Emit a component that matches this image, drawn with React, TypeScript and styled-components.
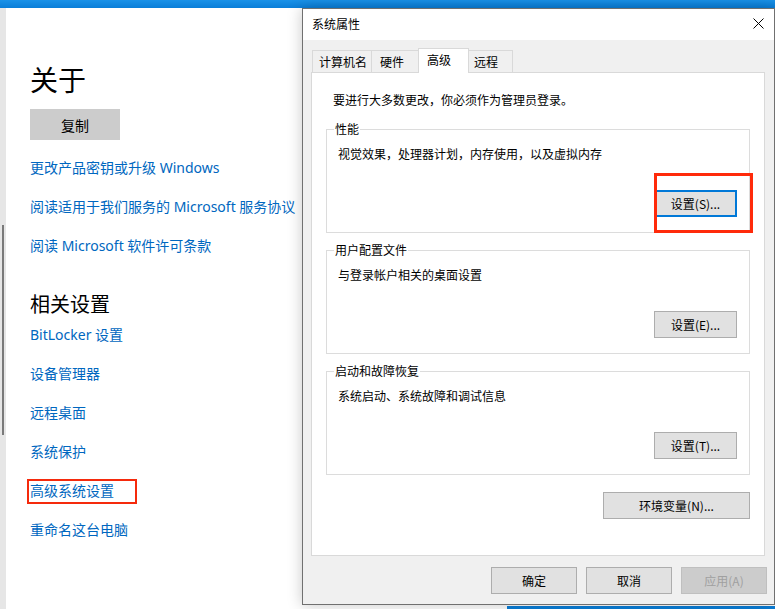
import React from "react";
import styled, { createGlobalStyle, css } from "styled-components";

const Global = createGlobalStyle`
  html, body { margin: 0; padding: 0; }
  body {
    width: 775px;
    height: 609px;
    overflow: hidden;
    background: #ffffff;
    font-family: "Noto Sans", "Noto Sans CJK SC", sans-serif;
  }
  * { box-sizing: border-box; }
`;

const Screen = styled.div`
  position: relative;
  width: 775px;
  height: 609px;
  display: flex;
  flex-direction: column;
  background: #ffffff;
  overflow: hidden;
`;

const TopBar = styled.div`
  flex: none;
  height: 8px;
  background: linear-gradient(#1a92e8, #0a7ed8);
`;

const BottomStrip = styled.div`
  position: absolute;
  left: 507px;
  top: 606px;
  width: 268px;
  height: 3px;
  background: #0a7ed8;
`;

const SettingsWindow = styled.div`
  flex: 1;
  display: flex;
`;

const ScrollTrack = styled.div`
  flex: none;
  width: 6px;
  background: #e6e6e6;
  padding-top: 217px;
  display: flex;
  justify-content: center;
  align-items: flex-start;
`;

const ScrollThumb = styled.div`
  width: 2px;
  height: 210px;
  background: #7a7a7a;
`;

const SettingsContent = styled.div`
  flex: 1;
  display: flex;
  flex-direction: column;
  align-items: flex-start;
  padding-left: 24px;
  color: #000;
`;

const PageTitle = styled.h1`
  margin: 52px 0 0;
  font-size: 28px;
  line-height: 40px;
  font-weight: 400;
  font-family: "Noto Sans", "Noto Sans CJK SC", sans-serif;
`;

const SectionTitle = styled.h2`
  margin: 35px 0 0;
  font-size: 20px;
  line-height: 28px;
  font-weight: 400;
  font-family: "Noto Sans", "Noto Sans CJK SC", sans-serif;
`;

const CopyButton = styled.button`
  margin-top: 9px;
  width: 90px;
  height: 31px;
  border: none;
  background: #cccccc;
  color: #000;
  font-size: 14px;
  font-family: "Noto Sans", "Noto Sans CJK SC", sans-serif;
  padding: 0;
`;

const LinkList = styled.div<{ $top: number }>`
  margin-top: ${(p) => p.$top}px;
  display: flex;
  flex-direction: column;
  align-items: flex-start;
  gap: 19px;
`;

const SettingLink = styled.a<{ $marked?: boolean }>`
  position: relative;
  display: block;
  font-size: 14px;
  line-height: 20px;
  color: #0067c0;
  text-decoration: none;
  white-space: nowrap;
  ${(p) =>
    p.$marked &&
    css`
      &::after {
        content: "";
        position: absolute;
        left: -3px;
        top: -2px;
        width: 106px;
        height: 21px;
        border: 2px solid #f52a0c;
      }
    `}
`;

/* ---------- dialog ---------- */

const Dialog = styled.div`
  position: absolute;
  left: 302px;
  top: 8px;
  width: 473px;
  height: 597px;
  border: 1px solid #707070;
  background: #f0f0f0;
  box-shadow: 0 0 14px rgba(0, 0, 0, 0.22);
  display: flex;
  flex-direction: column;
  font-family: "Noto Sans CJK SC", "Noto Sans", sans-serif;
  font-size: 12px;
  color: #000;
`;

const TitleBar = styled.div`
  flex: none;
  height: 31px;
  background: #ffffff;
  display: flex;
  align-items: center;
  justify-content: space-between;
  padding: 0 10px 0 9px;
`;

const TitleText = styled.span`
  font-size: 12px;
  line-height: 16px;
  margin-top: -2px;
`;

const CloseIcon = styled.svg`
  width: 11px;
  height: 11px;
  margin-top: -2px;
`;

const Client = styled.div`
  flex: 1;
  display: flex;
  flex-direction: column;
  padding: 8px 7px 10px 8px;
`;

const TabRow = styled.div`
  flex: none;
  height: 25px;
  display: flex;
  align-items: flex-start;
  padding-left: 1px;
  margin-right: 2px;
`;

const Tab = styled.div<{ $w: number; $pad: number; $active?: boolean }>`
  width: ${(p) => p.$w}px;
  padding-left: ${(p) => p.$pad}px;
  border: 1px solid #d9d9d9;
  border-bottom: none;
  margin-left: -1px;
  white-space: nowrap;
  ${(p) =>
    p.$active
      ? css`
          position: relative;
          z-index: 1;
          height: 25px;
          background: #ffffff;
          line-height: 22px;
        `
      : css`
          margin-top: 2px;
          height: 22px;
          background: #f0f0f0;
          line-height: 21px;
        `}
  &:first-child {
    margin-left: 0;
  }
`;

const Panel = styled.div`
  flex: none;
  height: 484px;
  margin: -1px 2px 0 0;
  background: #ffffff;
  border: 1px solid #d9d9d9;
  display: flex;
  flex-direction: column;
  gap: 17px;
  padding: 0 14px;
`;

const Intro = styled.p`
  margin: 19px 0 4px 7px;
  line-height: 16px;
`;

const Group = styled.div`
  position: relative;
  height: 104px;
  border: 1px solid #dcdcdc;
  display: flex;
  flex-direction: column;
  align-items: flex-start;
  padding: 16px 12px 15px 11px;
`;

const Legend = styled.span`
  position: absolute;
  left: 7px;
  top: -9px;
  padding: 0 1px;
  background: #ffffff;
  line-height: 16px;
`;

const GroupText = styled.span`
  line-height: 16px;
`;

const ButtonRow = styled.div<{ $top?: number; $gap?: number }>`
  display: flex;
  justify-content: flex-end;
  align-self: stretch;
  gap: ${(p) => p.$gap ?? 0}px;
  margin-top: ${(p) => p.$top ?? 0}px;
`;

const WinButton = styled.button<{ $w: number; $focused?: boolean; $marked?: boolean }>`
  position: relative;
  width: ${(p) => p.$w}px;
  height: 27px;
  padding: 0;
  background: #e1e1e1;
  border: 1px solid #adadad;
  color: #000;
  font-family: "Noto Sans CJK SC", "Noto Sans", sans-serif;
  font-size: 12px;
  line-height: 16px;
  &:disabled {
    background: #cccccc;
    border-color: #bfbfbf;
    color: #a0a0a0;
  }
  ${(p) =>
    p.$focused &&
    css`
      border: 2px solid #0078d7;
    `}
  ${(p) =>
    p.$marked &&
    css`
      &::after {
        content: "";
        position: absolute;
        left: -2px;
        top: -19px;
        width: 93px;
        height: 54px;
        border: 3px solid #ff2a0a;
      }
    `}
`;

const EnvRow = styled(ButtonRow)`
  margin-top: 0;
`;

const DialogButtons = styled.div`
  flex: none;
  display: flex;
  justify-content: flex-end;
  gap: 9px;
  margin-top: 11px;
`;

const aboutLinks = [
  "更改产品密钥或升级 Windows",
  "阅读适用于我们服务的 Microsoft 服务协议",
  "阅读 Microsoft 软件许可条款",
];

const relatedLinks = [
  "BitLocker 设置",
  "设备管理器",
  "远程桌面",
  "系统保护",
  "高级系统设置",
  "重命名这台电脑",
];

const tabs = [
  { label: "计算机名", w: 60, pad: 6 },
  { label: "硬件", w: 48, pad: 8 },
  { label: "高级", w: 51, pad: 8, active: true },
  { label: "远程", w: 45, pad: 5 },
];

const groups = [
  { legend: "性能", text: "视觉效果，处理器计划，内存使用，以及虚拟内存", button: "设置(S)...", focused: true },
  { legend: "用户配置文件", text: "与登录帐户相关的桌面设置", button: "设置(E)..." },
  { legend: "启动和故障恢复", text: "系统启动、系统故障和调试信息", button: "设置(T)..." },
];

export default function App() {
  return (
    <>
      <Global />
      <Screen>
        <TopBar />
        <SettingsWindow>
          <ScrollTrack>
            <ScrollThumb />
          </ScrollTrack>
          <SettingsContent>
            <PageTitle>关于</PageTitle>
            <CopyButton>复制</CopyButton>
            <LinkList $top={18}>
              {aboutLinks.map((l) => (
                <SettingLink key={l}>{l}</SettingLink>
              ))}
            </LinkList>
            <SectionTitle>相关设置</SectionTitle>
            <LinkList $top={6}>
              {relatedLinks.map((l) => (
                <SettingLink key={l} $marked={l === "高级系统设置"}>
                  {l}
                </SettingLink>
              ))}
            </LinkList>
          </SettingsContent>
        </SettingsWindow>
        <BottomStrip />

        <Dialog>
          <TitleBar>
            <TitleText>系统属性</TitleText>
            <CloseIcon viewBox="0 0 11 11">
              <path d="M0.5 0.5 L10.5 10.5 M10.5 0.5 L0.5 10.5" stroke="#000" strokeWidth="1" fill="none" />
            </CloseIcon>
          </TitleBar>
          <Client>
            <TabRow>
              {tabs.map((t) => (
                <Tab key={t.label} $w={t.w} $pad={t.pad} $active={t.active}>
                  {t.label}
                </Tab>
              ))}
            </TabRow>
            <Panel>
              <Intro>要进行大多数更改，你必须作为管理员登录。</Intro>
              {groups.map((g) => (
                <Group key={g.legend}>
                  <Legend>{g.legend}</Legend>
                  <GroupText>{g.text}</GroupText>
                  <ButtonRow $top={28}>
                    <WinButton $w={83} $focused={g.focused} $marked={g.focused}>
                      {g.button}
                    </WinButton>
                  </ButtonRow>
                </Group>
              ))}
              <EnvRow>
                <WinButton $w={147}>环境变量(N)...</WinButton>
              </EnvRow>
            </Panel>
            <DialogButtons>
              <WinButton $w={86}>确定</WinButton>
              <WinButton $w={86}>取消</WinButton>
              <WinButton $w={86} disabled>
                应用(A)
              </WinButton>
            </DialogButtons>
          </Client>
        </Dialog>
      </Screen>
    </>
  );
}
